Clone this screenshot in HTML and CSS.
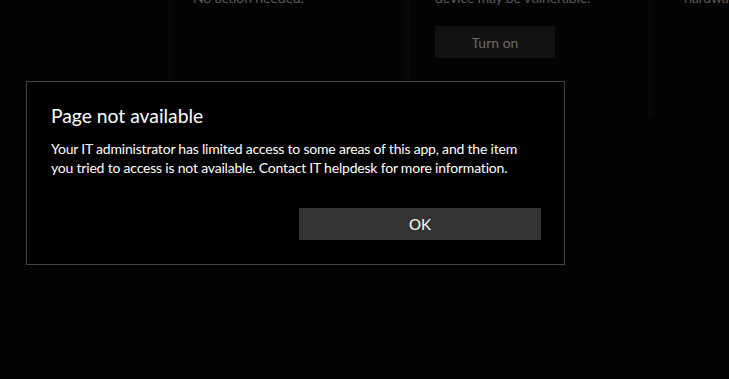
FILE: index.html
```html
<!DOCTYPE html>
<html>
<head>
<meta charset="utf-8">
<link rel="stylesheet" href="styles.css">
</head>
<body>
<div class="page">
  <div class="cards">
    <div class="card card-a"></div>
    <div class="card card-b"><p class="card-text">No action needed.</p></div>
    <div class="card card-c">
      <p class="card-text">device may be vulnerable.</p>
      <div class="btn-dim">Turn on</div>
    </div>
    <div class="card card-d"><p class="card-text">hardware</p></div>
  </div>
  <div class="hline"></div>
</div>
<div class="dialog">
  <h1 class="dialog-title">Page not available</h1>
  <p class="dialog-body">Your IT administrator has limited access to some areas of this app, and the item you tried to access is not available. Contact IT helpdesk for more information.</p>
  <div class="dialog-actions">
    <button class="btn-ok">OK</button>
  </div>
</div>
</body>
</html>
```
FILE: styles.css
```css
html, body {
  margin: 0;
  padding: 0;
  background: #030303;
  width: 729px;
  height: 379px;
  overflow: hidden;
  font-family: "Lato", "Noto Sans", sans-serif;
}
.page {
  width: 729px;
  height: 379px;
}
.cards {
  display: flex;
  gap: 5px;
  margin-top: -12px;
  height: 129px;
  background: #070707;
}
.card {
  background: #030303;
  height: 129px;
  box-sizing: border-box;
  flex-shrink: 0;
  min-width: 0;
  overflow: hidden;
}
.card-a { width: 167px; }
.card-b { width: 233px; padding-left: 21px; }
.card-c { width: 238px; padding-left: 25px; }
.card-d { flex: 1 1 0; padding-left: 31px; }
.card-text {
  margin: 0;
  font-size: 14px;
  letter-spacing: -0.1px;
  line-height: 20px;
  color: #5a5a5a;
  white-space: nowrap;
}
.btn-dim {
  margin-top: 18px;
  width: 120px;
  height: 32px;
  background: #121212;
  color: #6a6a6a;
  font-size: 14px;
  display: flex;
  align-items: center;
  justify-content: center;
}
.hline {
  margin: -13px 0 0 695px;
  height: 1px;
  background: #161616;
}
.dialog {
  position: absolute;
  left: 26px;
  top: 81px;
  box-sizing: border-box;
  width: 539px;
  height: 184px;
  background: #000;
  border: 1px solid #454545;
  padding: 20px 23px 0 24px;
  color: #fff;
}
.dialog-title {
  margin: 0;
  font-size: 19.3px;
  font-weight: 400;
  line-height: 28px;
}
.dialog-body {
  margin: 9px 0 0 0;
  max-width: 480px;
  font-size: 14px;
  letter-spacing: -0.2px;
  line-height: 19px;
}
.dialog-actions {
  display: flex;
  justify-content: flex-end;
  margin-top: 31px;
}
.btn-ok {
  width: 242px;
  height: 32px;
  background: #333;
  border: none;
  color: #fff;
  font-family: inherit;
  font-size: 15px;
  padding: 0;
}
```
